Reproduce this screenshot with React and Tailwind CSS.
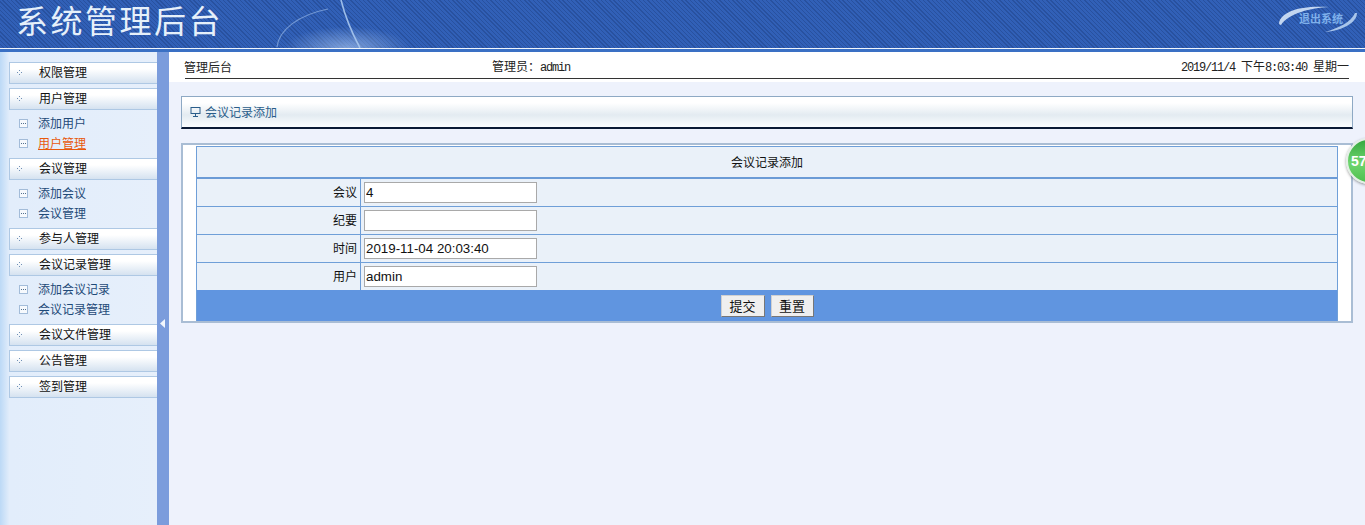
import React from "react";

const cjk = "font-['Noto_Sans_CJK_SC','Liberation_Sans',sans-serif]";

const menu = [
  { name: "权限管理" },
  { name: "用户管理", subs: [{ name: "添加用户" }, { name: "用户管理", active: true }] },
  { name: "会议管理", subs: [{ name: "添加会议" }, { name: "会议管理" }] },
  { name: "参与人管理" },
  { name: "会议记录管理", subs: [{ name: "添加会议记录" }, { name: "会议记录管理" }] },
  { name: "会议文件管理" },
  { name: "公告管理" },
  { name: "签到管理" },
];

const rows = [
  { label: "会议", value: "4" },
  { label: "纪要", value: "" },
  { label: "时间", value: "2019-11-04 20:03:40" },
  { label: "用户", value: "admin" },
];

function Dots() {
  return (
    <svg width="5" height="5" viewBox="0 0 5 5" className="shrink-0">
      <rect x="2" y="0" width="1" height="1" fill="#6f8fb5" />
      <rect x="2" y="4" width="1" height="1" fill="#6f8fb5" />
      <rect x="0" y="2" width="1" height="1" fill="#6f8fb5" />
      <rect x="4" y="2" width="1" height="1" fill="#6f8fb5" />
    </svg>
  );
}

function SubIcon() {
  return (
    <svg width="9" height="9" viewBox="0 0 9 9" className="shrink-0">
      <rect x="0.5" y="0.5" width="8" height="8" fill="#f6f9fd" stroke="#a3bcd9" />
      <rect x="2" y="4" width="1" height="1" fill="#52708f" />
      <rect x="4" y="4" width="1" height="1" fill="#52708f" />
      <rect x="6" y="4" width="1" height="1" fill="#52708f" />
    </svg>
  );
}

function Sidebar() {
  return (
    <aside className="flex w-[157px] shrink-0 flex-col bg-gradient-to-r from-[#bcd9f6] from-0% via-[#e2edfb] via-[6%] to-[#e6effb] pl-[9px] pt-[10px]">
      {menu.map((m) => (
        <div key={m.name}>
          <div className="mb-1 flex h-[22px] items-center border border-r-0 border-[#aec8e4] bg-gradient-to-b from-[#ffffff] from-30% to-[#d5e2f0] pb-[2px] pl-[7px] text-[12px] text-[#111]">
            <Dots />
            <span className="ml-[17px]">{m.name}</span>
          </div>
          {m.subs && (
            <div className="-mt-px flex flex-col pb-[5px]">
              {m.subs.map((s) => (
                <div key={s.name} className="flex h-[20px] items-center pl-[10px] text-[12px]">
                  <SubIcon />
                  <span className={s.active ? "ml-[10px] text-[#e8590c] underline" : "ml-[10px] text-[#1f4a78]"}>
                    {s.name}
                  </span>
                </div>
              ))}
            </div>
          )}
        </div>
      ))}
    </aside>
  );
}

function Header() {
  return (
    <header className="relative h-[52px] shrink-0 border-b-[3px] border-[#3a70c4] bg-[#2d58ac] bg-[repeating-linear-gradient(45deg,#28519f_0px,#28519f_1px,#3160b7_1px,#3160b7_3px)]">
      <svg width="140" height="48" viewBox="0 0 140 48" className="absolute left-[270px] top-0">
        <defs>
          <radialGradient id="glow" cx="0.55" cy="1" r="0.45">
            <stop offset="0%" stopColor="#9fbdea" stopOpacity="0.7" />
            <stop offset="100%" stopColor="#9fbdea" stopOpacity="0" />
          </radialGradient>
        </defs>
        <rect x="0" y="0" width="140" height="48" fill="url(#glow)" />
        <path d="M7 47 C9 30 28 15 58 9" fill="none" stroke="#8fb0e2" strokeWidth="1.2" opacity="0.7" />
        <path d="M71 0 C75 16 82 33 90 48" fill="none" stroke="#a9c8ee" strokeWidth="1.6" opacity="0.9" />
      </svg>
      <div className="relative flex h-[48px] items-center justify-between pb-[8px] pl-[16px] pr-[5px]">
        <h1 className="mt-[4px] font-['Liberation_Sans','Noto_Sans_CJK_SC',sans-serif] text-[32px] leading-[40px] tracking-[2.5px] text-[#e6f0fa]">系统管理后台</h1>
        <div className="relative -mt-[3px] flex h-[30px] w-[81px] items-center justify-center">
          <svg width="81" height="30" viewBox="0 0 81 30" className="absolute inset-0">
            <path d="M0 19 C2 8 20 1 50 3 C32 4 10 9 2 21 C1 21 0 20 0 19 Z" fill="#c3d6f0" />
            <path d="M78 9 C78 19 62 27 46 28 C60 24 72 18 76 9 Z" fill="#a9c5ea" />
          </svg>
          <span className="relative ml-[3px] text-[11px] font-bold text-[#7fb0ea]">退出系统</span>
        </div>
      </div>
      <div className="absolute bottom-0 left-0 h-px w-full bg-[#f1f6fc]"></div>
    </header>
  );
}

function TopBar() {
  return (
    <div className="h-[30px] bg-white pl-4 pr-4">
      <div className="flex h-[27px] items-center border-b border-[#333] pt-[3px] text-[12px] text-[#222]">
        <span className="-ml-px w-[308px]">管理后台</span>
        <span className="font-['Liberation_Mono','Noto_Sans_CJK_SC',monospace] text-[12px] tracking-[-1.2px]">
          <span className={`${cjk} tracking-normal`}>管理员：</span>admin
        </span>
        <span className="ml-auto font-['Liberation_Mono','Noto_Sans_CJK_SC',monospace] text-[12px] tracking-[-1.2px]">
          2019/11/4 <span className={`${cjk} tracking-normal`}>下午</span>8:03:40{" "}
          <span className={`${cjk} tracking-normal`}>星期一</span>
        </span>
      </div>
    </div>
  );
}

function FormTable() {
  return (
    <div className="mt-[14px] border-2 border-[#a9bdd4] bg-white pl-[13px] pr-[13px] pt-[1px]">
      <div className="border-x border-t border-[#6f9fd8] bg-[#eaf1f9]">
        <div className="flex h-[32px] items-center justify-center border-b-2 border-[#6b9bd6] text-[12px] text-[#111]">
          会议记录添加
        </div>
        {rows.map((r) => (
          <div key={r.label} className="flex h-[28px] border-b border-[#6f9fd8] last-of-type:border-b-0">
            <div className="flex w-[164px] items-center justify-end border-r border-[#6b9bd6] pb-[1px] pr-[3px] text-[12px] text-[#111]">
              {r.label}
            </div>
            <div className="flex items-center pl-[3px]">
              <input
                readOnly
                value={r.value}
                className="h-[21px] w-[173px] border border-[#a9a9a9] bg-white px-[1px] font-['Liberation_Sans',sans-serif] text-[13.33px] text-[#111] outline-none"
              />
            </div>
          </div>
        ))}
        <div className="-mt-px flex h-[31px] items-center justify-center gap-[6px] bg-[#6095e0]">
          <button className="h-[22px] w-[44px] border border-[#d0d0d0] border-b-[#777] border-r-[#777] bg-[#efefef] text-[13px] text-[#111]">提交</button>
          <button className="h-[22px] w-[43px] border border-[#d0d0d0] border-b-[#777] border-r-[#777] bg-[#efefef] text-[13px] text-[#111]">重置</button>
        </div>
      </div>
    </div>
  );
}

export default function App() {
  return (
    <div className={`relative flex h-[525px] w-[1365px] flex-col overflow-hidden bg-[#eef2fc] ${cjk}`}>
      <Header />
      <div className="flex min-h-0 flex-1">
        <Sidebar />
        <div className="relative flex w-[12px] shrink-0 flex-col bg-[#7b9cdc]">
          <svg width="5" height="9" viewBox="0 0 5 9" className="absolute left-[3px] top-[267px]">
            <path d="M5 0 L0 4.5 L5 9 Z" fill="#f2f6fd" />
          </svg>
        </div>
        <main className="min-w-0 flex-1">
          <TopBar />
          <div className="pl-[12px] pr-[12px] pt-[14px]">
            <div className="flex h-[33px] items-center border border-[#8ea9c4] border-b-2 border-b-[#0b1a35] bg-gradient-to-b from-[#ffffff] from-20% via-[#e3ebf1] via-60% to-[#fbfdff] pb-[1px] pl-[8px] text-[12px] text-[#2a5d8a]">
              <svg width="11" height="11" viewBox="0 0 11 11" className="mr-[4px]">
                <rect x="1" y="1.5" width="9" height="6" fill="none" stroke="#2a5d8a" />
                <path d="M5.5 8v2M3 10.5h5" stroke="#2a5d8a" />
              </svg>
              会议记录添加
            </div>
            <FormTable />
          </div>
        </main>
      </div>
      <div className="absolute left-[1346px] top-[138px] flex h-[46px] w-[46px] items-center rounded-full border-2 border-[#e4efe6] bg-[linear-gradient(180deg,#35a83f,#6fd56f_55%,#4fc04f)] pl-[3px] shadow-[0_1px_3px_#0006]">
        <span className="font-['Liberation_Sans',sans-serif] text-[14px] font-bold text-white">57</span>
      </div>
    </div>
  );
}
